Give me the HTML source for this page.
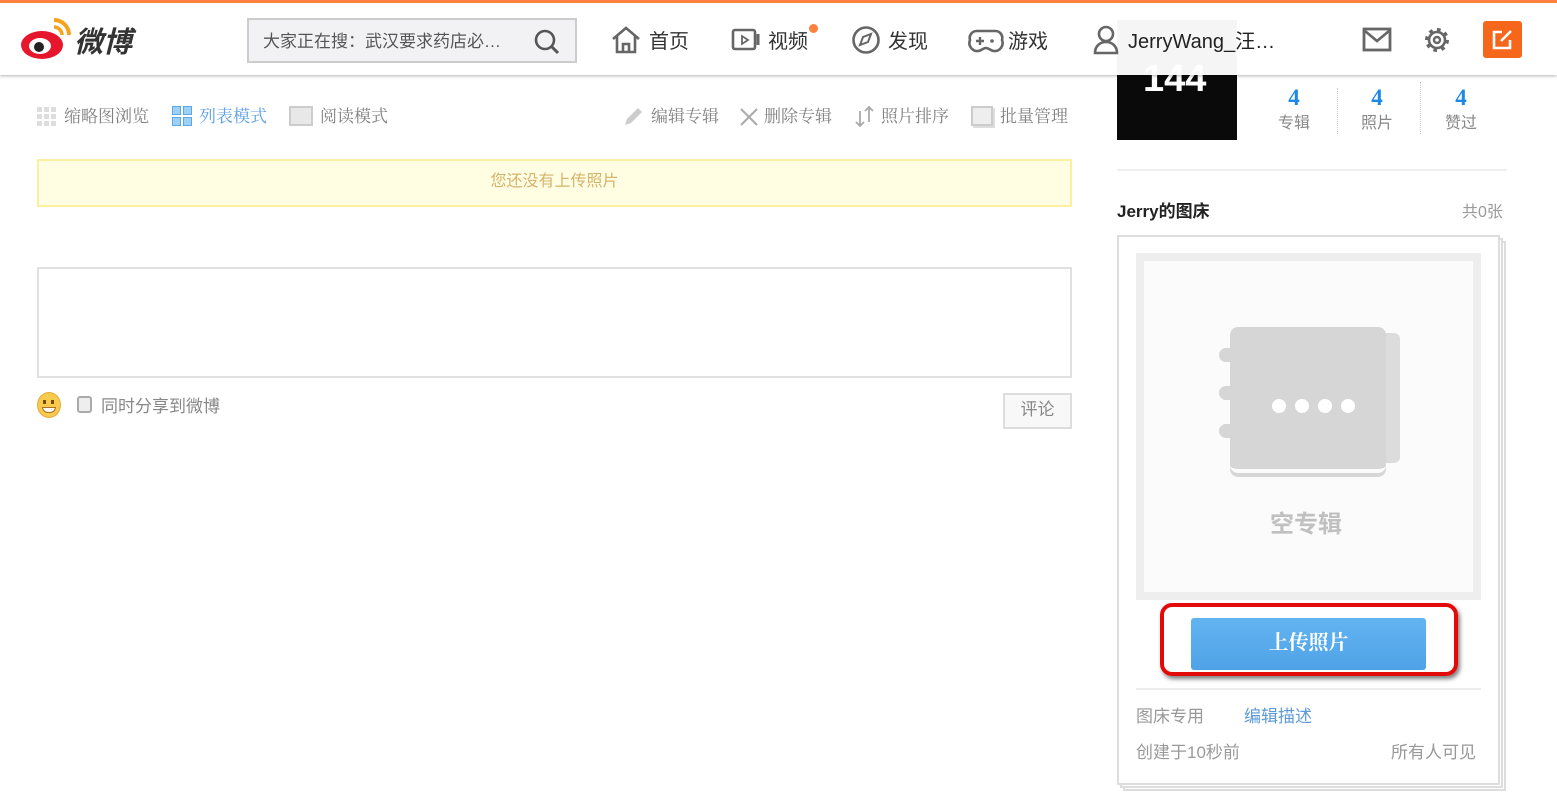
<!DOCTYPE html>
<html><head><meta charset="utf-8"><style>
*{margin:0;padding:0;box-sizing:border-box}
body{width:1557px;height:809px;overflow:hidden;background:#fff;font-family:"Liberation Sans","Noto Sans CJK SC",sans-serif;position:relative;color:#333}
.a{position:absolute}
.hdr{left:0;top:0;width:1557px;height:75px;background:rgba(255,255,255,.96);border-top:3px solid #ff8140;box-shadow:0 1px 3px rgba(0,0,0,.3);z-index:5}
.nav{font-size:20px;color:#333;top:22px}
.tb{top:102px;font-size:17px;color:#808080;font-family:"Liberation Serif","Noto Serif CJK SC",serif}
</style></head><body>
<div class="a" style="left:1117px;top:20px;width:120px;height:120px;background:#0a0a0a"></div>
<div class="a" style="left:1143px;top:58px;font:bold 38px 'Liberation Sans',sans-serif;color:#fff">144</div>

<div class="a hdr">
 <svg class="a" style="left:20px;top:12px" width="56" height="46" viewBox="0 0 56 46"><ellipse cx="22" cy="30" rx="21" ry="14" fill="#e6162d"/><ellipse cx="20" cy="31" rx="11" ry="8" fill="#fff"/><circle cx="19" cy="32" r="5" fill="#222"/><path d="M34 5a15 15 0 0 1 15 15" stroke="#f7a21b" stroke-width="4" fill="none"/><path d="M34 12a8 8 0 0 1 8 8" stroke="#f7a21b" stroke-width="3.5" fill="none"/></svg>
 <div class="a" style="left:74px;top:16px;font-size:29px;font-style:italic;color:#333;font-weight:bold">微博</div>
 <div class="a" style="left:247px;top:15px;width:330px;height:45px;background:#f2f2f5;border:2px solid #ccc;font-size:17px;color:#555;padding:7px 14px">大家正在搜：武汉要求药店必…</div>
 <svg class="a" style="left:533px;top:25px" width="28" height="28"><circle cx="12" cy="12" r="9" stroke="#555" stroke-width="2.6" fill="none"/><path d="M19 19l6 6" stroke="#555" stroke-width="3"/></svg>
 <svg class="a" style="left:610px;top:22px" width="32" height="30"><path d="M3 14L16 3l13 11M7 11v16h18V11M13 27v-8h6v8" stroke="#666" stroke-width="2.6" fill="none"/></svg>
 <div class="a nav" style="left:649px">首页</div>
 <svg class="a" style="left:731px;top:24px" width="34" height="26"><rect x="2" y="3" width="22" height="19" rx="2" stroke="#666" stroke-width="2.6" fill="none"/><path d="M11 9v8l6-4z" stroke="#666" stroke-width="1.8" fill="none"/><path d="M27 7v11" stroke="#666" stroke-width="3"/></svg>
 <div class="a nav" style="left:768px">视频</div>
 <div class="a" style="left:809px;top:21px;width:9px;height:9px;border-radius:50%;background:#ff8140"></div>
 <svg class="a" style="left:850px;top:22px" width="32" height="32"><circle cx="16" cy="15" r="12.5" stroke="#666" stroke-width="2.6" fill="none"/><path d="M21 9l-3 8-8 3 3-8z" stroke="#666" stroke-width="2" fill="none"/></svg>
 <div class="a nav" style="left:888px">发现</div>
 <svg class="a" style="left:968px;top:23px" width="36" height="30"><path d="M9 5h18a7 7 0 0 1 7 9a8 8 0 0 1-8 11c-3 0-5-3-8-3s-5 3-8 3a8 8 0 0 1-8-11a7 7 0 0 1 7-9z" stroke="#666" stroke-width="2.6" fill="none"/><path d="M8 15h8M12 11v8" stroke="#666" stroke-width="2.4"/><circle cx="24" cy="15" r="1.8" fill="#666"/></svg>
 <div class="a nav" style="left:1008px">游戏</div>
 <svg class="a" style="left:1092px;top:21px" width="28" height="32"><circle cx="14" cy="10" r="7" stroke="#666" stroke-width="2.6" fill="none"/><path d="M3 29c0-7 5-11 11-11s11 4 11 11z" stroke="#666" stroke-width="2.6" fill="none"/></svg>
 <div class="a nav" style="left:1128px;color:#222">JerryWang_汪…</div>
 <svg class="a" style="left:1362px;top:24px" width="30" height="26"><rect x="2" y="2" width="26" height="21" stroke="#666" stroke-width="2.8" fill="none"/><path d="M3 4l12 10 12-10" stroke="#666" stroke-width="2.6" fill="none"/></svg>
 <svg class="a" style="left:1422px;top:22px" width="30" height="30" viewBox="0 0 30 30"><circle cx="15" cy="15" r="10" stroke="#666" stroke-width="4" stroke-dasharray="3.5 4.3" fill="none"/><circle cx="15" cy="15" r="8" stroke="#666" stroke-width="2.6" fill="none"/><circle cx="15" cy="15" r="3" stroke="#666" stroke-width="2.4" fill="none"/></svg>
 <div class="a" style="left:1483px;top:18px;width:39px;height:37px;background:#f6661b;border-radius:3px"></div>
 <svg class="a" style="left:1483px;top:18px" width="39" height="37"><path d="M19 11h-8v16h16v-8" stroke="#fff" stroke-width="2.6" fill="none"/><path d="M18 20l10-10" stroke="#fff" stroke-width="2.6"/></svg>
</div>

<div class="a" style="left:37px;top:106px;width:20px;height:20px;background:repeating-linear-gradient(90deg,#ddd 0 5px,transparent 5px 7px),#fff;-webkit-mask:repeating-linear-gradient(0deg,#000 0 5px,transparent 5px 7px)"></div>
<div class="a tb" style="left:64px">缩略图浏览</div>
<div class="a" style="left:172px;top:106px;width:9px;height:9px;background:#9cd0f5;border:1px solid #5aa8e6"></div>
<div class="a" style="left:183px;top:106px;width:9px;height:9px;background:#9cd0f5;border:1px solid #5aa8e6"></div>
<div class="a" style="left:172px;top:117px;width:9px;height:9px;background:#9cd0f5;border:1px solid #5aa8e6"></div>
<div class="a" style="left:183px;top:117px;width:9px;height:9px;background:#9cd0f5;border:1px solid #5aa8e6"></div>
<div class="a tb" style="left:199px;color:#5ca1e6">列表模式</div>
<div class="a" style="left:289px;top:106px;width:24px;height:20px;border:2px solid #ccc;background:#e8e8e8"></div>
<div class="a tb" style="left:320px">阅读模式</div>
<svg class="a" style="left:622px;top:106px" width="22" height="22"><path d="M3 19l2-6 11-11 4 4-11 11z" fill="#ccc"/></svg>
<div class="a tb" style="left:651px">编辑专辑</div>
<svg class="a" style="left:739px;top:107px" width="20" height="20"><path d="M2 2l16 16M18 2L2 18" stroke="#aaa" stroke-width="2"/></svg>
<div class="a tb" style="left:764px">删除专辑</div>
<svg class="a" style="left:853px;top:105px" width="24" height="22"><path d="M7 6v15M3 17l4 4 4-4M16 17V2M12 6l4-4 4 4" stroke="#aaa" stroke-width="1.8" fill="none"/></svg>
<div class="a tb" style="left:881px">照片排序</div>
<div class="a" style="left:971px;top:106px;width:22px;height:20px;border:2px solid #ccc;background:#eee;box-shadow:2px 2px 0 #ddd"></div>
<div class="a tb" style="left:1000px">批量管理</div>

<div class="a" style="left:37px;top:159px;width:1035px;height:48px;background:#fffee3;border:2px solid #faf0a0;text-align:center;font-size:16px;color:#d6b26c;line-height:42px">您还没有上传照片</div>
<div class="a" style="left:37px;top:267px;width:1035px;height:111px;border:2px solid #e0e0e0"></div>
<div class="a" style="left:37px;top:392px;width:24px;height:26px;border-radius:50%;background:#f7cb4d;border:1px solid #e8a93a"></div>
<div class="a" style="left:43px;top:400px;width:3px;height:4px;background:#7a4a10"></div>
<div class="a" style="left:51px;top:400px;width:3px;height:4px;background:#7a4a10"></div>
<div class="a" style="left:42px;top:407px;width:14px;height:6px;border-radius:0 0 7px 7px;background:#fff;border:1px solid #b07020"></div>
<div class="a" style="left:77px;top:396px;width:15px;height:17px;border:2px solid #aaa;border-radius:3px;background:#eee"></div>
<div class="a" style="left:101px;top:392px;font-size:17px;color:#888">同时分享到微博</div>
<div class="a" style="left:1003px;top:393px;width:69px;height:36px;border:2px solid #ddd;background:#f8f8f8;font-size:17px;color:#888;text-align:center;line-height:30px">评论</div>

<div class="a" style="left:1337px;top:88px;width:1px;height:46px;border-left:1px dotted #ccc"></div>
<div class="a" style="left:1420px;top:82px;width:1px;height:52px;border-left:1px dotted #ccc"></div>
<div class="a" style="left:1264px;top:85px;width:60px;text-align:center;color:#1e88e5;font:bold 23px 'Liberation Serif',serif">4</div>
<div class="a" style="left:1264px;top:109px;width:60px;text-align:center;color:#888;font-size:16px">专辑</div>
<div class="a" style="left:1347px;top:85px;width:60px;text-align:center;color:#1e88e5;font:bold 23px 'Liberation Serif',serif">4</div>
<div class="a" style="left:1347px;top:109px;width:60px;text-align:center;color:#888;font-size:16px">照片</div>
<div class="a" style="left:1431px;top:85px;width:60px;text-align:center;color:#1e88e5;font:bold 23px 'Liberation Serif',serif">4</div>
<div class="a" style="left:1431px;top:109px;width:60px;text-align:center;color:#888;font-size:16px">赞过</div>
<div class="a" style="left:1117px;top:169px;width:390px;height:2px;background:#eee"></div>
<div class="a" style="left:1117px;top:197px;font-size:17px;color:#222;font-weight:bold">Jerry的图床</div>
<div class="a" style="left:1462px;top:198px;font-size:16px;color:#999">共0张</div>

<div class="a" style="left:1123px;top:241px;width:383px;height:550px;border:2px solid #ddd;background:#fff"></div>
<div class="a" style="left:1120px;top:238px;width:383px;height:550px;border:2px solid #ddd;background:#fff"></div>
<div class="a" style="left:1117px;top:235px;width:383px;height:550px;border:2px solid #ddd;background:#fff"></div>
<div class="a" style="left:1136px;top:253px;width:345px;height:347px;background:#fbfbfb;border:8px solid #eee"></div>
<div class="a" style="left:1240px;top:333px;width:160px;height:130px;background:#dcdcdc;border-radius:6px"></div>
<div class="a" style="left:1230px;top:327px;width:156px;height:146px;background:#d6d6d6;border-radius:8px;border-bottom:4px solid #fbfbfb;box-shadow:0 4px 0 #d6d6d6"></div>
<div class="a" style="left:1219px;top:348px;width:24px;height:14px;border-radius:7px;background:#d6d6d6"></div>
<div class="a" style="left:1219px;top:386px;width:24px;height:14px;border-radius:7px;background:#d6d6d6"></div>
<div class="a" style="left:1219px;top:424px;width:24px;height:14px;border-radius:7px;background:#d6d6d6"></div>
<div class="a" style="left:1272px;top:399px;width:14px;height:14px;border-radius:50%;background:#fff"></div>
<div class="a" style="left:1295px;top:399px;width:14px;height:14px;border-radius:50%;background:#fff"></div>
<div class="a" style="left:1318px;top:399px;width:14px;height:14px;border-radius:50%;background:#fff"></div>
<div class="a" style="left:1341px;top:399px;width:14px;height:14px;border-radius:50%;background:#fff"></div>
<div class="a" style="left:1270px;top:504px;font-size:24px;color:#c0c0c0;font-weight:bold">空专辑</div>
<div class="a" style="left:1160px;top:603px;width:298px;height:73px;border:4px solid #e30a0a;border-radius:12px;box-shadow:2px 3px 4px rgba(0,0,0,.5)"></div>
<div class="a" style="left:1191px;top:618px;width:235px;height:52px;background:linear-gradient(#62b4f1,#4fa2e6);border-radius:3px;color:#fff;font-size:20px;font-weight:bold;text-align:center;line-height:50px;font-family:'Liberation Serif','Noto Serif CJK SC',serif">上传照片</div>
<div class="a" style="left:1136px;top:688px;width:345px;height:2px;background:#eee"></div>
<div class="a" style="left:1136px;top:702px;font-size:17px;color:#999">图床专用</div>
<div class="a" style="left:1244px;top:702px;font-size:17px;color:#5d9ad8">编辑描述</div>
<div class="a" style="left:1136px;top:738px;font-size:17px;color:#999">创建于10秒前</div>
<div class="a" style="left:1391px;top:738px;font-size:17px;color:#999">所有人可见</div>
</body></html>
